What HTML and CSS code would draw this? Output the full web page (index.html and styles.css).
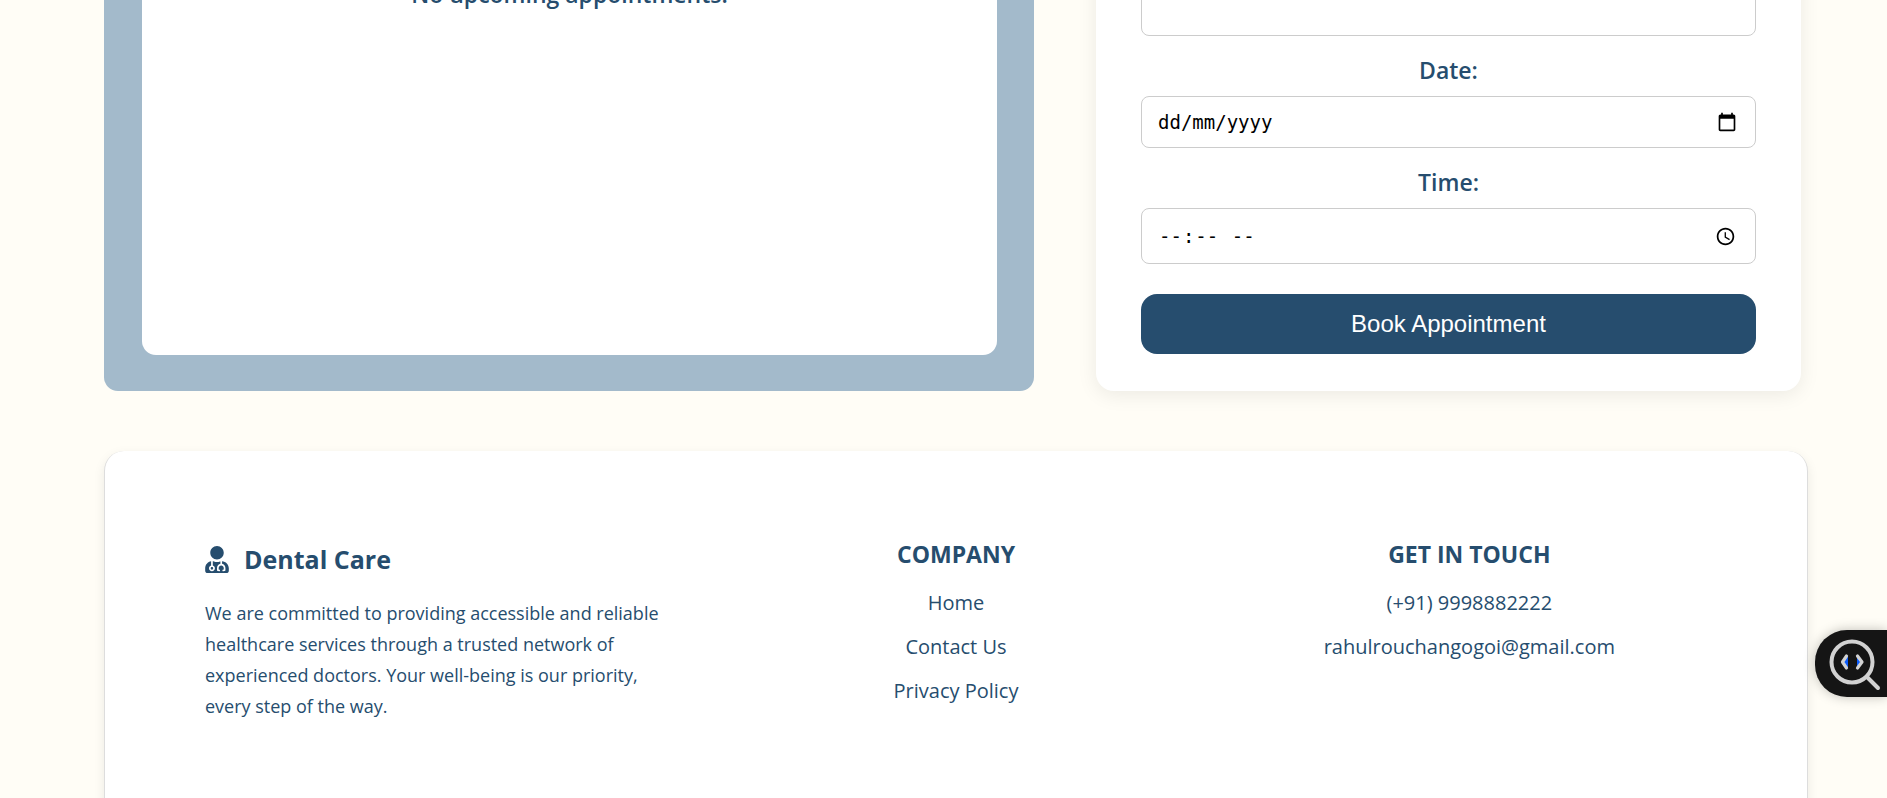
FILE: index.html
```
<!DOCTYPE html>
<html lang="en-IN">
<head>
<meta charset="utf-8">
<meta name="viewport" content="width=device-width, initial-scale=1">
<title>Dental Care</title>
<link rel="stylesheet" href="styles.css">
</head>
<body>
<main class="dashboard">
  <section class="upcoming">
    <div class="upcoming-list">
      <p class="empty">No upcoming appointments.</p>
    </div>
  </section>
  <form class="booking">
    <textarea class="field notes" aria-label="Notes"></textarea>
    <label class="label" for="date">Date:</label>
    <div class="field date">
      <input class="date-input" type="text" id="date" inputmode="numeric" placeholder="dd/mm/yyyy">
      <button class="date-picker" type="button" aria-label="Open calendar">
        <svg class="date-icon" viewBox="0 0 24 24" aria-hidden="true"><path d="M20 3h-1V1h-2v2H7V1H5v2H4c-1.100 0-2 .9-2 2v16c0 1.100.9 2 2 2h16c1.100 0 2-.9 2-2V5c0-1.100-.9-2-2-2zm0 18H4V8h16v13z"/></svg>
      </button>
    </div>
    <label class="label" for="time">Time:</label>
    <input class="field time" type="time" id="time">
    <button class="submit" type="button">Book Appointment</button>
  </form>
</main>
<footer class="footer">
  <section class="about">
    <h2 class="brand">
      <svg class="brand-icon" viewBox="0 0 448 512" aria-hidden="true"><path fill="currentColor" d="M224 256c70.700 0 128-57.300 128-128S294.700 0 224 0 96 57.300 96 128s57.300 128 128 128zM104 424c0 13.300 10.700 24 24 24s24-10.700 24-24-10.700-24-24-24-24 10.700-24 24zm216-135.400v49c36.500 7.400 64 39.800 64 78.400v41.700c0 7.600-5.400 14.200-12.900 15.700l-32.200 6.400c-4.300.9-8.500-1.900-9.400-6.300l-3.100-15.700c-.9-4.300 1.900-8.600 6.300-9.400l19.300-3.900V416c0-62.800-96-65.100-96 1.900v26.700l19.300 3.900c4.300.9 7.100 5.100 6.300 9.400l-3.100 15.700c-.9 4.300-5.100 7.100-9.400 6.300l-31.200-4.200c-7.900-1.100-13.800-7.800-13.800-15.900V416c0-38.600 27.500-70.900 64-78.400v-45.200c-2.200.7-4.400 1.100-6.600 1.900-18 6.300-37.300 9.800-57.400 9.800s-39.400-3.500-57.400-9.800c-7.400-2.600-14.900-4.200-22.600-5.200v81.600c23.100 6.900 40 28.100 40 53.400 0 30.900-25.100 56-56 56s-56-25.100-56-56c0-25.300 16.900-46.500 40-53.400v-80.400C48.500 301 0 355.800 0 422.400v44.800C0 491.900 20.100 512 44.800 512h358.400c24.700 0 44.800-20.100 44.800-44.800v-44.800c0-72-56.800-130.300-128-133.800z"/></svg>
      Dental Care
    </h2>
    <p class="mission">We are committed to providing accessible and reliable healthcare services through a trusted network of experienced doctors. Your well-being is our priority, every step of the way.</p>
  </section>
  <nav class="column">
    <h2 class="heading">COMPANY</h2>
    <ul class="links">
      <li><a href="#">Home</a></li>
      <li><a href="#">Contact Us</a></li>
      <li><a href="#">Privacy Policy</a></li>
    </ul>
  </nav>
  <section class="column">
    <h2 class="heading">GET IN TOUCH</h2>
    <ul class="links">
      <li>(+91) 9998882222</li>
      <li>rahulrouchangogoi@gmail.com</li>
    </ul>
  </section>
</footer>
<button class="inspect" type="button" aria-label="Inspect code">
  <svg class="inspect-icon" viewBox="0 0 54 54" fill="none" stroke="#d2d2d2" stroke-linecap="round" stroke-linejoin="round" aria-hidden="true">
    <path d="M19 19v12l-6-6zM28 19v12l6-6z" fill="#0b5cff" stroke="none"/>
    <circle cx="23" cy="25" r="20.500" stroke-width="4"/>
    <path d="M38 40l11 11" stroke-width="4"/>
    <path d="M17.500 19l-4 6 4 6M28.500 19l4.500 6-4.500 6" stroke-width="3.200"/>
  </svg>
</button>
</body>
</html>
```
FILE: styles.css
```
* {
  box-sizing: border-box;
}

body {
  margin: 0;
  height: 100vh;
  overflow: hidden;
  padding: 0 79px 0 104px;
  background: #fffdf6;
  color: #264d6e;
  font-family: "Segoe UI", "Open Sans", sans-serif;
}

.dashboard {
  display: grid;
  grid-template-columns: 930fr 705fr;
  gap: 62px;
  margin: -60px 7px 60px 0;
}

.upcoming {
  display: flex;
  padding: 0 37px 36px 38px;
  border-radius: 14px;
  background: #a3bacb;
}

.upcoming-list {
  flex: 1;
  padding-top: 38px;
  border-radius: 0 0 14px 14px;
  background: #fff;
}

.empty {
  margin: 0;
  font-size: 23px;
  line-height: 32px;
  font-weight: 600;
  text-align: center;
}

.booking {
  display: flex;
  flex-direction: column;
  padding: 0 45px 37px;
  border-radius: 18px;
  background: #fff;
  box-shadow: 0 4px 20px rgba(0, 0, 0, 0.08);
}

.field {
  width: 100%;
  padding: 0 16px;
  border: 1px solid #ccc;
  border-radius: 8px;
  background: #fff;
  color: #000;
  font-family: Consolas, "DejaVu Sans Mono", monospace;
  font-size: 19px;
}

.notes {
  height: 96px;
  resize: none;
}

.date {
  display: flex;
  align-items: center;
  height: 52px;
}

.date-input {
  flex: 1;
  min-width: 0;
  padding: 0;
  border: 0;
  background: none;
  color: inherit;
  font: inherit;
}

.date-input::placeholder {
  color: #000;
}

.date-picker {
  display: flex;
  padding: 0 2px;
  border: 0;
  background: none;
}

.date-icon {
  width: 20px;
  height: 20px;
}

.time {
  height: 56px;
}

.time::-webkit-calendar-picker-indicator {
  width: 21px;
  height: 21px;
}

.label {
  padding: 18px 0 10px;
  font-size: 23px;
  line-height: 32px;
  font-weight: 600;
  text-align: center;
}

.submit {
  height: 60px;
  margin-top: 30px;
  border: 0;
  border-radius: 16px;
  background: #264d6e;
  color: #fff;
  font-family: "Liberation Sans", Arial, sans-serif;
  font-size: 24px;
}

.footer {
  display: grid;
  grid-template-columns: repeat(3, 1fr);
  gap: 38px;
  min-height: 400px;
  padding: 87px 100px;
  border: 1px solid #ddd;
  border-top: 0;
  border-radius: 20px;
  background: #fff;
  box-shadow: 0 4px 12px rgba(0, 0, 0, 0.08);
}

.brand {
  display: flex;
  align-items: center;
  gap: 15px;
  margin: 0;
  font-size: 25px;
  line-height: 42px;
  font-weight: 700;
}

.brand-icon {
  width: 24px;
  height: 27px;
}

.mission {
  margin: 18px 0 0;
  padding-right: 12px;
  font-size: 18px;
  line-height: 31px;
}

.column {
  text-align: center;
}

.heading {
  margin: 0;
  font-size: 23px;
  line-height: 32px;
  font-weight: 700;
}

.links {
  display: grid;
  gap: 12px;
  margin: 17px 0 0;
  padding: 0;
  list-style: none;
  font-size: 20px;
  line-height: 32px;
}

.links a {
  color: inherit;
  text-decoration: none;
}

.inspect {
  position: fixed;
  right: 0;
  top: 630px;
  display: flex;
  align-items: center;
  width: 72px;
  height: 67px;
  padding: 0 0 0 14px;
  border: 0;
  border-radius: 32px 0 0 32px;
  background: #151515;
  box-shadow: 0 0 12px rgba(0, 0, 0, 0.25);
}

.inspect-icon {
  flex: none;
  width: 54px;
  height: 54px;
}
```
